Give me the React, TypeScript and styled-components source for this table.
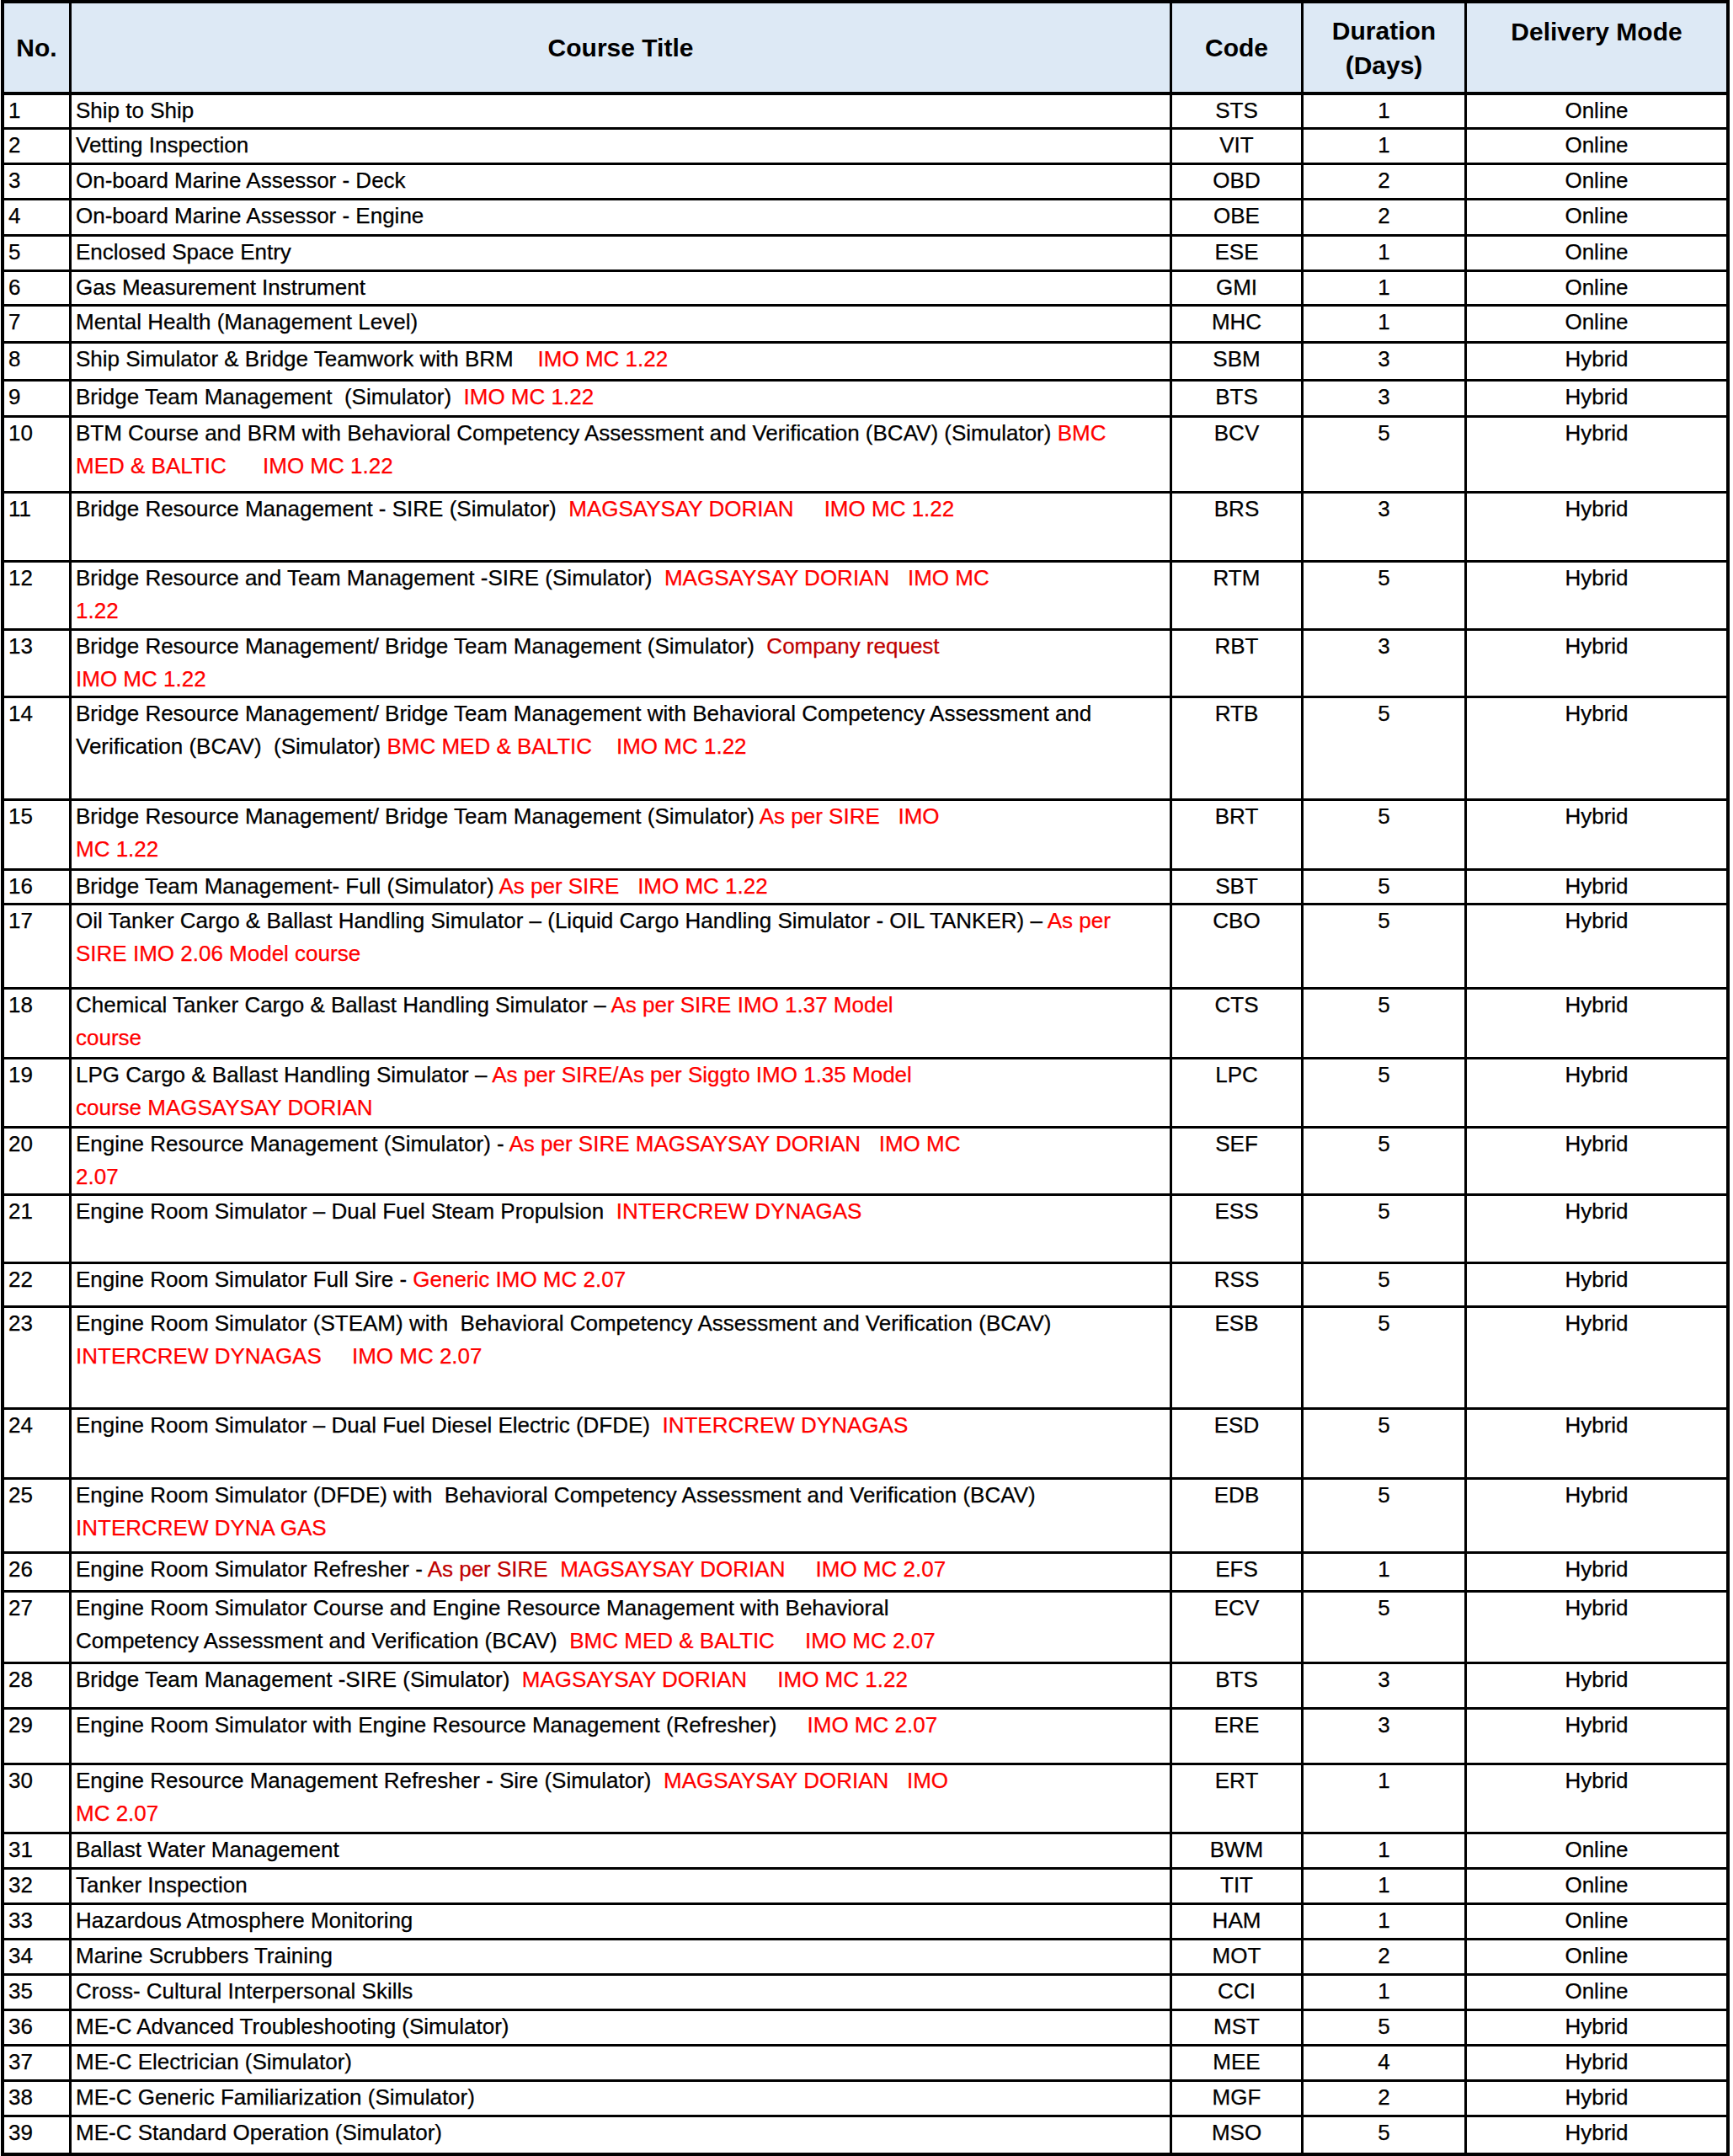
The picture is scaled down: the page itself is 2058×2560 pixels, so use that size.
import React from "react";
import styled, { createGlobalStyle } from "styled-components";

type Tone = "red" | "dark";
type Seg = string | [string, Tone];

interface Course {
    no: number;
    title: Seg[][];
    code: string;
    days: number;
    mode: "Online" | "Hybrid";
    h: number;
}

const r = (t: string): Seg => [t, "red"];
const d = (t: string): Seg => [t, "dark"];

const courses: Course[] = [
    { no: 1, title: [["Ship to Ship"]], code: "STS", days: 1, mode: "Online", h: 41 },
    { no: 2, title: [["Vetting Inspection"]], code: "VIT", days: 1, mode: "Online", h: 42 },
    { no: 3, title: [["On-board Marine Assessor - Deck"]], code: "OBD", days: 2, mode: "Online", h: 42 },
    { no: 4, title: [["On-board Marine Assessor - Engine"]], code: "OBE", days: 2, mode: "Online", h: 43 },
    { no: 5, title: [["Enclosed Space Entry"]], code: "ESE", days: 1, mode: "Online", h: 42 },
    { no: 6, title: [["Gas Measurement Instrument"]], code: "GMI", days: 1, mode: "Online", h: 41 },
    { no: 7, title: [["Mental Health (Management Level)"]], code: "MHC", days: 1, mode: "Online", h: 44 },
    { no: 8, title: [["Ship Simulator & Bridge Teamwork with BRM    ", r("IMO MC 1.22")]], code: "SBM", days: 3, mode: "Hybrid", h: 45 },
    { no: 9, title: [["Bridge Team Management  (Simulator)  ", r("IMO MC 1.22")]], code: "BTS", days: 3, mode: "Hybrid", h: 43 },
    {
        no: 10,
        title: [
            ["BTM Course and BRM with Behavioral Competency Assessment and Verification (BCAV) (Simulator) ", r("BMC")],
            [r("MED & BALTIC      IMO MC 1.22")],
        ],
        code: "BCV", days: 5, mode: "Hybrid", h: 90,
    },
    { no: 11, title: [["Bridge Resource Management - SIRE (Simulator)  ", r("MAGSAYSAY DORIAN     IMO MC 1.22")]], code: "BRS", days: 3, mode: "Hybrid", h: 82 },
    {
        no: 12,
        title: [["Bridge Resource and Team Management -SIRE (Simulator)  ", r("MAGSAYSAY DORIAN   IMO MC")], [r("1.22")]],
        code: "RTM", days: 5, mode: "Hybrid", h: 81,
    },
    {
        no: 13,
        title: [["Bridge Resource Management/ Bridge Team Management (Simulator)  ", d("Company request")], [r("IMO MC 1.22")]],
        code: "RBT", days: 3, mode: "Hybrid", h: 80,
    },
    {
        no: 14,
        title: [
            ["Bridge Resource Management/ Bridge Team Management with Behavioral Competency Assessment and"],
            ["Verification (BCAV)  (Simulator) ", r("BMC MED & BALTIC    IMO MC 1.22")],
        ],
        code: "RTB", days: 5, mode: "Hybrid", h: 122,
    },
    {
        no: 15,
        title: [["Bridge Resource Management/ Bridge Team Management (Simulator) ", r("As per SIRE   IMO")], [r("MC 1.22")]],
        code: "BRT", days: 5, mode: "Hybrid", h: 83,
    },
    { no: 16, title: [["Bridge Team Management- Full (Simulator) ", r("As per SIRE   IMO MC 1.22")]], code: "SBT", days: 5, mode: "Hybrid", h: 41 },
    {
        no: 17,
        title: [
            ["Oil Tanker Cargo & Ballast Handling Simulator \u2013 (Liquid Cargo Handling Simulator - OIL TANKER) \u2013 ", r("As per")],
            [r("SIRE IMO 2.06 Model course")],
        ],
        code: "CBO", days: 5, mode: "Hybrid", h: 100,
    },
    {
        no: 18,
        title: [["Chemical Tanker Cargo & Ballast Handling Simulator \u2013 ", r("As per SIRE IMO 1.37 Model")], [r("course")]],
        code: "CTS", days: 5, mode: "Hybrid", h: 83,
    },
    {
        no: 19,
        title: [["LPG Cargo & Ballast Handling Simulator \u2013 ", r("As per SIRE/As per Siggto IMO 1.35 Model")], [r("course MAGSAYSAY DORIAN")]],
        code: "LPC", days: 5, mode: "Hybrid", h: 82,
    },
    {
        no: 20,
        title: [["Engine Resource Management (Simulator) - ", r("As per SIRE MAGSAYSAY DORIAN   IMO MC")], [r("2.07")]],
        code: "SEF", days: 5, mode: "Hybrid", h: 80,
    },
    { no: 21, title: [["Engine Room Simulator \u2013 Dual Fuel Steam Propulsion  ", r("INTERCREW DYNAGAS")]], code: "ESS", days: 5, mode: "Hybrid", h: 81 },
    { no: 22, title: [["Engine Room Simulator Full Sire - ", r("Generic IMO MC 2.07")]], code: "RSS", days: 5, mode: "Hybrid", h: 52 },
    {
        no: 23,
        title: [
            ["Engine Room Simulator (STEAM) with  Behavioral Competency Assessment and Verification (BCAV)"],
            [r("INTERCREW DYNAGAS     IMO MC 2.07")],
        ],
        code: "ESB", days: 5, mode: "Hybrid", h: 121,
    },
    { no: 24, title: [["Engine Room Simulator \u2013 Dual Fuel Diesel Electric (DFDE)  ", r("INTERCREW DYNAGAS")]], code: "ESD", days: 5, mode: "Hybrid", h: 83 },
    {
        no: 25,
        title: [
            ["Engine Room Simulator (DFDE) with  Behavioral Competency Assessment and Verification (BCAV)"],
            [r("INTERCREW DYNA GAS")],
        ],
        code: "EDB", days: 5, mode: "Hybrid", h: 88,
    },
    {
        no: 26,
        title: [["Engine Room Simulator Refresher - ", d("As per SIRE"), r("  MAGSAYSAY DORIAN     IMO MC 2.07")]],
        code: "EFS", days: 1, mode: "Hybrid", h: 46,
    },
    {
        no: 27,
        title: [
            ["Engine Room Simulator Course and Engine Resource Management with Behavioral"],
            ["Competency Assessment and Verification (BCAV)  ", r("BMC MED & BALTIC     IMO MC 2.07")],
        ],
        code: "ECV", days: 5, mode: "Hybrid", h: 85,
    },
    { no: 28, title: [["Bridge Team Management -SIRE (Simulator)  ", r("MAGSAYSAY DORIAN     IMO MC 1.22")]], code: "BTS", days: 3, mode: "Hybrid", h: 54 },
    { no: 29, title: [["Engine Room Simulator with Engine Resource Management (Refresher)     ", r("IMO MC 2.07")]], code: "ERE", days: 3, mode: "Hybrid", h: 66 },
    {
        no: 30,
        title: [["Engine Resource Management Refresher - Sire (Simulator)  ", r("MAGSAYSAY DORIAN   IMO")], [r("MC 2.07")]],
        code: "ERT", days: 1, mode: "Hybrid", h: 82,
    },
    { no: 31, title: [["Ballast Water Management"]], code: "BWM", days: 1, mode: "Online", h: 42 },
    { no: 32, title: [["Tanker Inspection"]], code: "TIT", days: 1, mode: "Online", h: 42 },
    { no: 33, title: [["Hazardous Atmosphere Monitoring"]], code: "HAM", days: 1, mode: "Online", h: 42 },
    { no: 34, title: [["Marine Scrubbers Training"]], code: "MOT", days: 2, mode: "Online", h: 42 },
    { no: 35, title: [["Cross- Cultural Interpersonal Skills"]], code: "CCI", days: 1, mode: "Online", h: 42 },
    { no: 36, title: [["ME-C Advanced Troubleshooting (Simulator)"]], code: "MST", days: 5, mode: "Hybrid", h: 42 },
    { no: 37, title: [["ME-C Electrician (Simulator)"]], code: "MEE", days: 4, mode: "Hybrid", h: 42 },
    { no: 38, title: [["ME-C Generic Familiarization (Simulator)"]], code: "MGF", days: 2, mode: "Hybrid", h: 42 },
    { no: 39, title: [["ME-C Standard Operation (Simulator)"]], code: "MSO", days: 5, mode: "Hybrid", h: 42 },
];

const GlobalStyle = createGlobalStyle`
  html, body {
    margin: 0;
    padding: 0;
    background: #ffffff;
  }
  body {
    font-family: "Liberation Sans", Arial, sans-serif;
    color: #000;
  }
`;

const COLS = "80px 1307px 156px 194px 308px";

const Sheet = styled.div`
  width: 2045px;
  margin-left: 1px;
  border: 4px solid #000;
  background: #fff;
`;

const HeaderRow = styled.div`
  display: grid;
  grid-template-columns: ${COLS};
  height: 109px;
  background: #dde9f5;
  border-bottom: 4px solid #000;
  box-sizing: border-box;
`;

const HeadCell = styled.div<{ $top?: boolean }>`
  display: flex;
  flex-direction: column;
  align-items: center;
  justify-content: ${(p) => (p.$top ? "flex-start" : "center")};
  padding-top: ${(p) => (p.$top ? "13px" : "0")};
  border-right: 3px solid #000;
  font-size: 30px;
  font-weight: 700;
  line-height: 41px;
  text-align: center;

  &:last-child {
    border-right: none;
  }
`;

const Row = styled.div<{ $h: number }>`
  display: grid;
  grid-template-columns: ${COLS};
  height: ${(p) => p.$h}px;
  border-bottom: 3px solid #000;
  box-sizing: border-box;

  &:last-child {
    border-bottom: none;
  }
`;

const Cell = styled.div<{ $align?: "left" | "center" }>`
  border-right: 3px solid #000;
  padding: 0 ${(p) => (p.$align === "center" ? "0" : "5px")};
  font-size: 26px;
  line-height: 36px;
  text-align: ${(p) => p.$align ?? "left"};
  white-space: pre;
  overflow: hidden;
  -webkit-text-stroke: 0.25px #000;

  &:last-child {
    border-right: none;
  }
`;

const Line = styled.div`
  height: 39px;
`;

const Note = styled.span<{ $tone: Tone }>`
  color: ${(p) => (p.$tone === "dark" ? "#c00000" : "#ff0000")};
  -webkit-text-stroke: 0.25px ${(p) => (p.$tone === "dark" ? "#c00000" : "#ff0000")};
`;

const renderSeg = (seg: Seg, i: number) =>
    typeof seg === "string" ? <span key={i}>{seg}</span> : <Note key={i} $tone={seg[1]}>{seg[0]}</Note>;

const App: React.FC = () => {
    return (
        <>
            <GlobalStyle />
            <Sheet>
                <HeaderRow>
                    <HeadCell>No.</HeadCell>
                    <HeadCell>Course Title</HeadCell>
                    <HeadCell>Code</HeadCell>
                    <HeadCell>
                        <span>Duration</span>
                        <span>(Days)</span>
                    </HeadCell>
                    <HeadCell $top>Delivery Mode</HeadCell>
                </HeaderRow>
                {courses.map((c) => (
                    <Row key={c.no} $h={c.h}>
                        <Cell>{c.no}</Cell>
                        <Cell>
                            {c.title.map((line, li) => (
                                <Line key={li}>{line.map(renderSeg)}</Line>
                            ))}
                        </Cell>
                        <Cell $align="center">{c.code}</Cell>
                        <Cell $align="center">{c.days}</Cell>
                        <Cell $align="center">{c.mode}</Cell>
                    </Row>
                ))}
            </Sheet>
        </>
    );
};

export default App;
